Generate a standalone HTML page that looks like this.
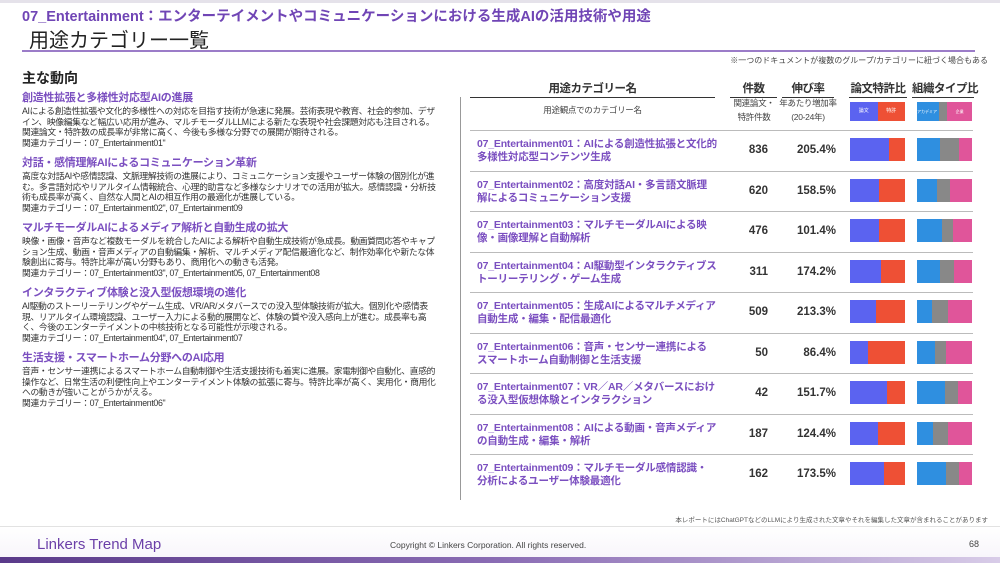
<!DOCTYPE html>
<html><head><meta charset="utf-8"><style>
*{margin:0;padding:0;box-sizing:border-box}
body{width:1000px;height:563px;position:relative;background:#fff;font-family:"Liberation Sans","Noto Sans CJK JP",sans-serif;color:#333;overflow:hidden}
.a{position:absolute;white-space:nowrap}
.h{font-size:11px;font-weight:bold;color:#7b4fc0;letter-spacing:-0.3px}
.b{font-size:8.8px;line-height:10.5px;color:#333;white-space:normal;width:418px;letter-spacing:-0.35px}
.row{position:absolute;left:470px;width:503px;height:41px;border-top:1.5px solid #bbb}
.nm{position:absolute;left:7px;top:7px;font-size:10.5px;font-weight:bold;color:#7b4fc0;line-height:13px;width:240px;letter-spacing:-0.2px}
.ct{position:absolute;right:205px;top:13px;font-size:11.5px;font-weight:bold;color:#333}
.rt{position:absolute;right:137px;top:13px;font-size:11.5px;font-weight:bold;color:#333}
.bar{position:absolute;top:7px;height:23px;width:55px;display:flex}
.bar div{height:100%}
.hd{position:absolute;top:80px;font-size:11.5px;font-weight:bold;color:#333;text-align:center;border-bottom:1.5px solid #333;padding-bottom:1px;white-space:nowrap;letter-spacing:-0.5px}
.sh{position:absolute;font-size:8.5px;color:#444;text-align:center;line-height:14px;white-space:nowrap;letter-spacing:-0.3px}
</style></head><body>
<div class="a" style="left:0;top:0;width:1000px;height:3px;background:#e5e2ea"></div>
<div class="a" style="left:22px;top:5px;font-size:14.5px;font-weight:bold;color:#7045b5">07_Entertainment：エンターテイメントやコミュニケーションにおける生成AIの活用技術や用途</div>
<div class="a" style="left:29px;top:24px;font-size:20px;color:#222">用途カテゴリー一覧</div>
<div class="a" style="left:22px;top:50px;width:953px;height:2px;background:#9b7cc8"></div>
<div class="a" style="right:12px;top:55px;font-size:8px;color:#444">※一つのドキュメントが複数のグループ/カテゴリーに紐づく場合もある</div>

<div class="a" style="left:22px;top:68px;font-size:14px;font-weight:bold;color:#222">主な動向</div>
<div class="a h" style="left:22px;top:89px">創造性拡張と多様性対応型AIの進展</div>
<div class="a b" style="left:22px;top:106px">AIによる創造性拡張や文化的多様性への対応を目指す技術が急速に発展。芸術表現や教育、社会的参加、デザイン、映像編集など幅広い応用が進み、マルチモーダルLLMによる新たな表現や社会課題対応も注目される。関連論文・特許数の成長率が非常に高く、今後も多様な分野での展開が期待される。<br>関連カテゴリー：07_Entertainment01"</div>
<div class="a h" style="left:22px;top:154px">対話・感情理解AIによるコミュニケーション革新</div>
<div class="a b" style="left:22px;top:171px">高度な対話AIや感情認識、文脈理解技術の進展により、コミュニケーション支援やユーザー体験の個別化が進む。多言語対応やリアルタイム情報統合、心理的助言など多様なシナリオでの活用が拡大。感情認識・分析技術も成長率が高く、自然な人間とAIの相互作用の最適化が進展している。<br>関連カテゴリー：07_Entertainment02", 07_Entertainment09</div>
<div class="a h" style="left:22px;top:219px">マルチモーダルAIによるメディア解析と自動生成の拡大</div>
<div class="a b" style="left:22px;top:236px">映像・画像・音声など複数モーダルを統合したAIによる解析や自動生成技術が急成長。動画質問応答やキャプション生成、動画・音声メディアの自動編集・解析、マルチメディア配信最適化など、制作効率化や新たな体験創出に寄与。特許比率が高い分野もあり、商用化への動きも活発。<br>関連カテゴリー：07_Entertainment03", 07_Entertainment05, 07_Entertainment08</div>
<div class="a h" style="left:22px;top:284px">インタラクティブ体験と没入型仮想環境の進化</div>
<div class="a b" style="left:22px;top:301px">AI駆動のストーリーテリングやゲーム生成、VR/AR/メタバースでの没入型体験技術が拡大。個別化や感情表現、リアルタイム環境認識、ユーザー入力による動的展開など、体験の質や没入感向上が進む。成長率も高く、今後のエンターテイメントの中核技術となる可能性が示唆される。<br>関連カテゴリー：07_Entertainment04", 07_Entertainment07</div>
<div class="a h" style="left:22px;top:349px">生活支援・スマートホーム分野へのAI応用</div>
<div class="a b" style="left:22px;top:366px">音声・センサー連携によるスマートホーム自動制御や生活支援技術も着実に進展。家電制御や自動化、直感的操作など、日常生活の利便性向上やエンターテイメント体験の拡張に寄与。特許比率が高く、実用化・商用化への動きが強いことがうかがえる。<br>関連カテゴリー：07_Entertainment06"</div>

<div class="a" style="left:460px;top:97px;width:1px;height:403px;background:#999"></div>

<div class="hd" style="left:470px;width:245px">用途カテゴリー名</div>
<div class="hd" style="left:730px;width:47px">件数</div>
<div class="hd" style="left:782px;width:52px">伸び率</div>
<div class="hd" style="left:849px;width:58px">論文特許比</div>
<div class="hd" style="left:912px;width:62px">組織タイプ比</div>
<div class="sh" style="left:470px;width:245px;top:103px">用途観点でのカテゴリー名</div>
<div class="sh" style="left:728px;width:52px;top:96px">関連論文・<br>特許件数</div>
<div class="sh" style="left:776px;width:64px;top:96px">年あたり増加率<br>(20-24年)</div>
<div class="a" style="left:850px;top:102px;width:55px;height:19px;display:flex;font-size:5px;color:#fff;align-items:center"><div style="background:#5b63f0;width:50%;height:100%;text-align:center;line-height:19px">論文</div><div style="background:#ee5035;width:50%;height:100%;text-align:center;line-height:19px">特許</div></div>
<div class="a" style="left:917px;top:102px;width:55px;height:19px;display:flex;font-size:4px;color:#fff"><div style="background:#2f8fe0;width:40%;line-height:19px">アカデミア</div><div style="background:#888;width:15%"></div><div style="background:#e0559a;width:45%;text-align:center;line-height:19px">企業</div></div>

<div class="row" style="top:130px"><div class="nm">07_Entertainment01：AIによる創造性拡張と文化的多様性対応型コンテンツ生成</div><div class="ct">836</div><div class="rt">205.4%</div><div class="bar" style="left:380px"><div style="width:71%;background:#5b63f0"></div><div style="flex:1;background:#ee5035"></div></div><div class="bar" style="left:447px"><div style="width:41%;background:#2f8fe0"></div><div style="width:36%;background:#888"></div><div style="flex:1;background:#e0559a"></div></div></div>
<div class="row" style="top:171px"><div class="nm">07_Entertainment02：高度対話AI・多言語文脈理解によるコミュニケーション支援</div><div class="ct">620</div><div class="rt">158.5%</div><div class="bar" style="left:380px"><div style="width:52%;background:#5b63f0"></div><div style="flex:1;background:#ee5035"></div></div><div class="bar" style="left:447px"><div style="width:36%;background:#2f8fe0"></div><div style="width:24%;background:#888"></div><div style="flex:1;background:#e0559a"></div></div></div>
<div class="row" style="top:211px"><div class="nm">07_Entertainment03：マルチモーダルAIによる映像・画像理解と自動解析</div><div class="ct">476</div><div class="rt">101.4%</div><div class="bar" style="left:380px"><div style="width:52%;background:#5b63f0"></div><div style="flex:1;background:#ee5035"></div></div><div class="bar" style="left:447px"><div style="width:45%;background:#2f8fe0"></div><div style="width:21%;background:#888"></div><div style="flex:1;background:#e0559a"></div></div></div>
<div class="row" style="top:252px"><div class="nm">07_Entertainment04：AI駆動型インタラクティブストーリーテリング・ゲーム生成</div><div class="ct">311</div><div class="rt">174.2%</div><div class="bar" style="left:380px"><div style="width:56%;background:#5b63f0"></div><div style="flex:1;background:#ee5035"></div></div><div class="bar" style="left:447px"><div style="width:41%;background:#2f8fe0"></div><div style="width:27%;background:#888"></div><div style="flex:1;background:#e0559a"></div></div></div>
<div class="row" style="top:292px"><div class="nm">07_Entertainment05：生成AIによるマルチメディア自動生成・編集・配信最適化</div><div class="ct">509</div><div class="rt">213.3%</div><div class="bar" style="left:380px"><div style="width:48%;background:#5b63f0"></div><div style="flex:1;background:#ee5035"></div></div><div class="bar" style="left:447px"><div style="width:27%;background:#2f8fe0"></div><div style="width:29%;background:#888"></div><div style="flex:1;background:#e0559a"></div></div></div>
<div class="row" style="top:333px"><div class="nm">07_Entertainment06：音声・センサー連携によるスマートホーム自動制御と生活支援</div><div class="ct">50</div><div class="rt">86.4%</div><div class="bar" style="left:380px"><div style="width:32%;background:#5b63f0"></div><div style="flex:1;background:#ee5035"></div></div><div class="bar" style="left:447px"><div style="width:32%;background:#2f8fe0"></div><div style="width:21%;background:#888"></div><div style="flex:1;background:#e0559a"></div></div></div>
<div class="row" style="top:373px"><div class="nm">07_Entertainment07：VR／AR／メタバースにおける没入型仮想体験とインタラクション</div><div class="ct">42</div><div class="rt">151.7%</div><div class="bar" style="left:380px"><div style="width:67%;background:#5b63f0"></div><div style="flex:1;background:#ee5035"></div></div><div class="bar" style="left:447px"><div style="width:50%;background:#2f8fe0"></div><div style="width:24%;background:#888"></div><div style="flex:1;background:#e0559a"></div></div></div>
<div class="row" style="top:414px"><div class="nm">07_Entertainment08：AIによる動画・音声メディアの自動生成・編集・解析</div><div class="ct">187</div><div class="rt">124.4%</div><div class="bar" style="left:380px"><div style="width:50%;background:#5b63f0"></div><div style="flex:1;background:#ee5035"></div></div><div class="bar" style="left:447px"><div style="width:29%;background:#2f8fe0"></div><div style="width:28%;background:#888"></div><div style="flex:1;background:#e0559a"></div></div></div>
<div class="row" style="top:454px"><div class="nm">07_Entertainment09：マルチモーダル感情認識・分析によるユーザー体験最適化</div><div class="ct">162</div><div class="rt">173.5%</div><div class="bar" style="left:380px"><div style="width:61%;background:#5b63f0"></div><div style="flex:1;background:#ee5035"></div></div><div class="bar" style="left:447px"><div style="width:53%;background:#2f8fe0"></div><div style="width:23%;background:#888"></div><div style="flex:1;background:#e0559a"></div></div></div>

<div class="a" style="right:12px;top:514px;font-size:6.5px;color:#555">本レポートにはChatGPTなどのLLMにより生成された文章やそれを編集した文章が含まれることがあります</div>
<div class="a" style="left:0;top:526px;width:1000px;height:1.5px;background:#e2e2e2"></div>
<div class="a" style="left:0;top:527px;width:1000px;height:30px;background:linear-gradient(#fff,#f8f6fb)"></div>
<div class="a" style="left:37px;top:536px;font-size:15px;color:#6b3fa8">Linkers Trend Map</div>
<div class="a" style="left:390px;top:540px;font-size:8.5px;color:#444">Copyright © Linkers Corporation. All rights reserved.</div>
<div class="a" style="left:969px;top:539px;font-size:9px;color:#444">68</div>
<div class="a" style="left:0;top:557px;width:1000px;height:6px;background:linear-gradient(90deg,#5a3a8a,#8a6cb4 50%,#d8cce8)"></div>
</body></html>
